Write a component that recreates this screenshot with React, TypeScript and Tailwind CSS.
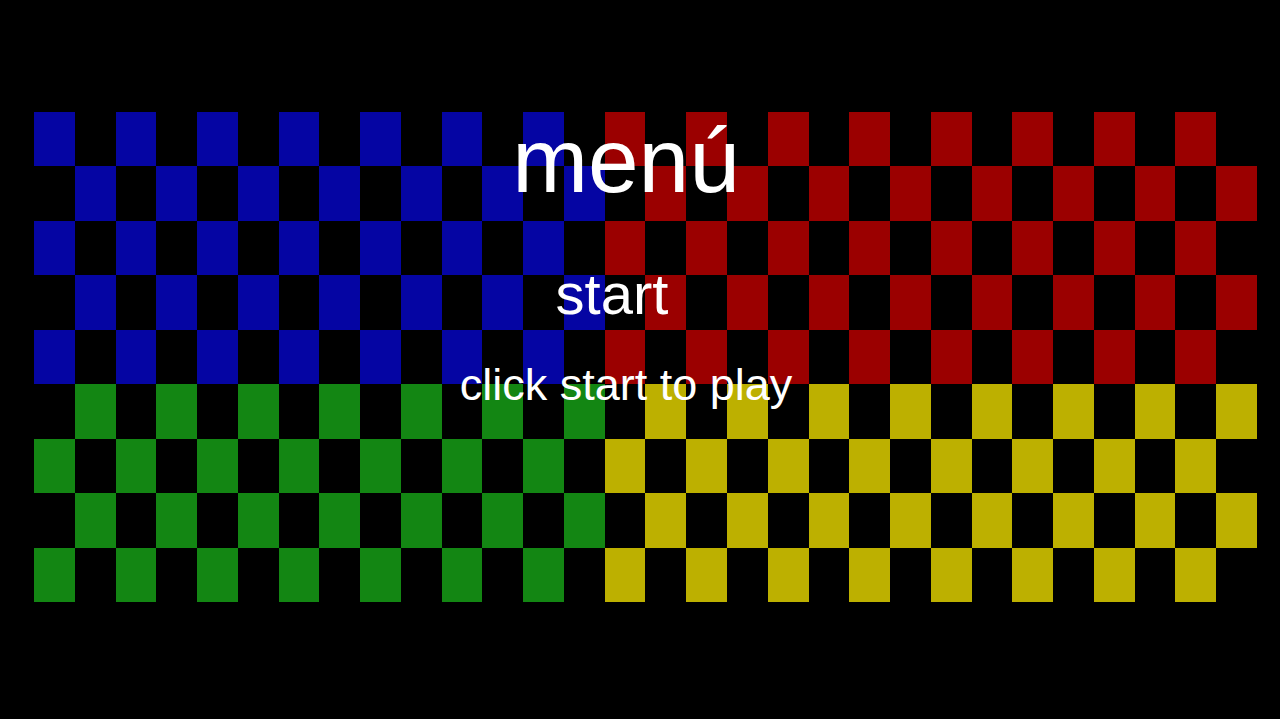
const COLS = 30;
const ROWS = 9;

function cellColor(r: number, c: number) {
  if ((r + c) % 2 !== 0) return 'bg-black';
  const top = r < 5;
  const left = c < 14;
  if (top && left) return 'bg-[#0505a3]';
  if (top) return 'bg-[#9b0000]';
  if (left) return 'bg-[#138613]';
  return 'bg-[#bdb000]';
}

export default function App() {
  const cells = [];
  for (let r = 0; r < ROWS; r++) {
    for (let c = 0; c < COLS; c++) {
      cells.push(<div key={`${r}-${c}`} className={cellColor(r, c)} />);
    }
  }

  return (
    <div
      className="relative h-[719px] w-[1280px] overflow-hidden bg-black"
      style={{ fontFamily: '"Liberation Sans", Arial, sans-serif' }}
    >
      {/* board */}
      <div className="pl-[34px] pt-[112px]">
        <div className="grid h-[490px] w-[1223px] grid-cols-[repeat(30,1fr)] grid-rows-[repeat(9,1fr)]">
          {cells}
        </div>
      </div>

      {/* menu text */}
      <div className="absolute inset-0 flex flex-col items-center pr-[28px] pt-[115px] text-white">
        <h1 className="text-[91px] leading-none">menú</h1>
        <button className="mr-[28px] mt-[59px] cursor-pointer text-[58px] leading-none">
          start
        </button>
        <p className="mt-[39px] text-[45px] leading-none">click start to play</p>
      </div>
    </div>
  );
}
